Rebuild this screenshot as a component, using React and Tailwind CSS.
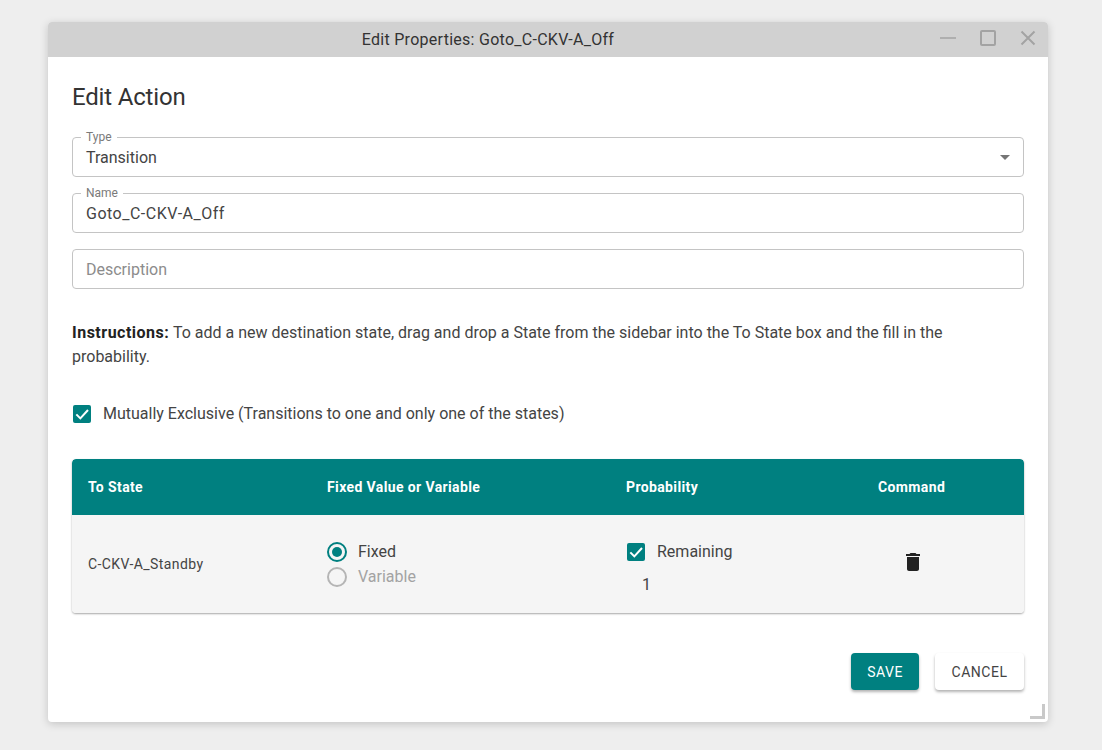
import React from "react";

function Check({ className = "" }) {
  return (
    <span className={"flex h-[18px] w-[18px] shrink-0 items-center justify-center rounded-[2px] bg-[#008080] " + className}>
      <svg width="16" height="16" viewBox="0 0 24 24" fill="none" stroke="white" strokeWidth="3">
        <path d="M3.5 12.5 L9.5 18.5 L21 6" />
      </svg>
    </span>
  );
}

function Field({ label, value, placeholder, select, valueClass = "" }) {
  return (
    <div className="relative flex h-10 items-center rounded-[4px] border border-[#c4c4c4] px-[13px] pt-[2px] text-base">
      {label && (
        <span className="absolute left-[8px] top-[-7px] bg-white px-[5px] text-xs leading-[12px] text-[#7a7a7a]">
          {label}
        </span>
      )}
      {value ? <span className={"text-[#444] " + valueClass}>{value}</span> : <span className="text-[#8c8c8c]">{placeholder}</span>}
      {select && (
        <svg className="absolute right-[13px] top-[17px]" width="10" height="5" viewBox="0 0 10 5">
          <path d="M0 0 H10 L5 5 Z" fill="#757575" />
        </svg>
      )}
    </div>
  );
}

function Radio({ on, label }) {
  return (
    <div className="flex h-[25px] items-center gap-[11px]">
      <svg width="20" height="20" viewBox="0 0 20 20">
        <circle cx="10" cy="10" r="9" fill="none" stroke={on ? "#008080" : "#b5b5b5"} strokeWidth="2" />
        {on && <circle cx="10" cy="10" r="5" fill="#008080" />}
      </svg>
      <span className={on ? "text-base text-[#444]" : "text-base text-[#a3a3a3]"}>{label}</span>
    </div>
  );
}

export default function App() {
  return (
    <div className="min-h-[750px] bg-[#eeeeee] pl-[48px] pt-[22px] font-['Roboto',sans-serif] text-[#333]">
      <div className="relative flex h-[700px] w-[1000px] flex-col overflow-hidden rounded-[4px] bg-white shadow-[0_2px_8px_rgba(0,0,0,0.18)]">
        <div className="relative flex h-[35px] shrink-0 items-center justify-center bg-[#d1d1d1] text-base text-[#333]">
          <span className="mr-[120px] tracking-[0.27px]">Edit Properties: Goto_C-CKV-A_Off</span>
          <div className="absolute right-[12px] top-[8px] flex items-center gap-[24px]">
            <svg width="16" height="16" viewBox="0 0 16 16"><path d="M0 8 H16" stroke="#a3a3a3" strokeWidth="1.6" /></svg>
            <svg width="16" height="16" viewBox="0 0 16 16"><rect x="1" y="1" width="14" height="14" rx="1" fill="none" stroke="#a3a3a3" strokeWidth="2" /></svg>
            <svg width="16" height="16" viewBox="0 0 16 16"><path d="M1.5 1.5 L14.5 14.5 M14.5 1.5 L1.5 14.5" stroke="#a3a3a3" strokeWidth="2" /></svg>
          </div>
        </div>
        <div className="flex flex-1 flex-col px-6">
          <h1 className="mt-[26px] text-2xl leading-[28px] font-normal tracking-[-0.18px] text-[#333]">Edit Action</h1>
          <div className="mt-[26px] flex flex-col gap-4">
            <Field label="Type" value="Transition" select />
            <Field label="Name" value="Goto_C-CKV-A_Off" valueClass="tracking-[0.5px]" />
            <Field placeholder="Description" />
          </div>
          <p className="mt-[32px] text-base leading-6 text-[#444]">
            <strong className="font-bold tracking-[0.5px] text-[#222]">Instructions:</strong> To add a new destination state, drag and drop a State from the sidebar into the To State box and the fill in the
            <br />
            probability.
          </p>
          <div className="mt-[33px] flex items-center gap-[12px] pl-px">
            <Check />
            <span className="text-base text-[#444]">Mutually Exclusive (Transitions to one and only one of the states)</span>
          </div>
          <div className="mt-[33px] overflow-hidden rounded-[4px] shadow-[0_1px_2px_rgba(0,0,0,0.35)]">
            <div className="grid h-14 grid-cols-[239px_299px_252px_146px] items-center rounded-t-[4px] bg-[#008080] pl-4 text-sm font-bold tracking-[0.38px] text-white">
              <span>To State</span>
              <span>Fixed Value or Variable</span>
              <span>Probability</span>
              <span>Command</span>
            </div>
            <div className="grid h-[98px] grid-cols-[239px_299px_252px_146px] items-center bg-[#f5f5f5] pl-4 text-sm">
              <span className="tracking-[0.4px] text-[#444]">C-CKV-A_Standby</span>
              <div className="flex flex-col">
                <Radio on label="Fixed" />
                <Radio label="Variable" />
              </div>
              <div className="flex flex-col pt-[8px] pl-px">
                <div className="flex items-center gap-[12px]">
                  <Check />
                  <span className="text-base text-[#444]">Remaining</span>
                </div>
                <span className="mt-[10px] pl-[15px] text-base leading-[22px] text-[#444]">1</span>
              </div>
              <div className="flex w-[70px] justify-center pb-[4px]">
                <svg width="24" height="24" viewBox="0 0 24 24" fill="#222">
                  <path d="M6 19c0 1.1.9 2 2 2h8c1.1 0 2-.9 2-2V7H6v12zM19 4h-3.5l-1-1h-5l-1 1H5v2h14V4z" />
                </svg>
              </div>
            </div>
          </div>
          <div className="mt-[40px] flex justify-end gap-4">
            <button className="h-[37px] w-[68px] rounded-[4px] bg-[#008080] text-sm tracking-[0.5px] text-white shadow-[0_2px_3px_rgba(0,0,0,0.3)]">SAVE</button>
            <button className="h-[37px] w-[89px] rounded-[4px] bg-white text-sm tracking-[0.5px] text-[#444] shadow-[0_2px_3px_rgba(0,0,0,0.3)]">CANCEL</button>
          </div>
        </div>
        <div className="absolute bottom-[3px] right-[3px] h-[15px] w-[15px] border-r-[3px] border-b-[3px] border-[#c9c9c9]" />
      </div>
    </div>
  );
}
